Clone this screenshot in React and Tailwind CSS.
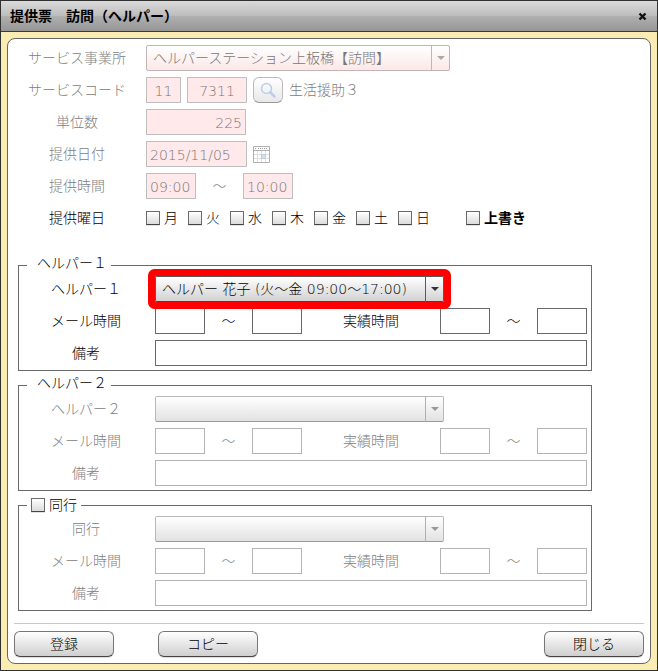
import React, { useState } from 'react'

const DAYS = ['月', '火', '水', '木', '金', '土', '日']

function TextBox({ required, className = '', ...props }) {
  const color = required
    ? 'bg-[#ffe9ea] border-[#bfbfbf]'
    : 'bg-white border-[#696969] disabled:border-[#b4b4b4]'
  return (
    <input
      type="text"
      className={`h-[26px] min-w-0 border px-[3px] pt-[2px] text-black disabled:text-[#777] outline-none ${color} ${className}`}
      {...props}
    />
  )
}

function CheckBox(props) {
  return (
    <input
      type="checkbox"
      className="appearance-none size-[14px] shrink-0 border border-[#6b6b6b] border-b-[#444] bg-linear-to-b from-white to-[#dcdcdc] shadow-[0_1px_0_#e4e4e4] checked:to-[#777]"
      {...props}
    />
  )
}

function DropDown({ id, options, disabled, required, marked, className = '' }) {
  let color = 'border-[#5a5a5a] border-b-[#444] from-white to-[#d2d2d2] text-black'
  let line = 'border-[#5a5a5a] text-[#333]'
  if (disabled) {
    color = 'border-[#b8b8b8] border-b-[#999] from-white to-[#e2e2e2] text-[#777]'
    line = 'border-[#b0b0b0] text-[#999]'
  }
  if (required) {
    color = 'border-[#c4b4b6] from-white to-[#fbe8e8] text-[#777]'
    line = 'border-[#c4b4b6] text-[#aaa]'
  }
  return (
    <div className={`relative rounded-xs ${marked ? 'z-10 ring-[7px] ring-[#ff0000]' : ''} ${className}`}>
      <select
        id={id}
        disabled={disabled}
        className={`block appearance-none w-full h-[26px] rounded-xs border bg-linear-to-b pl-[6px] pr-5 opacity-100 outline-none ${color}`}
      >
        {options.map((o) => <option key={o}>{o}</option>)}
      </select>
      <span className={`pointer-events-none absolute inset-y-0 right-0 w-[19px] border-l flex items-center justify-center ${line}`}>
        <svg width="8" height="4" viewBox="0 0 8 4"><path d="M0 0h8L4 4z" fill="currentColor" /></svg>
      </span>
    </div>
  )
}

function Row({ label, htmlFor, disabled, children }) {
  return (
    <div className="flex items-center gap-[6px] min-h-[26px]">
      <label htmlFor={htmlFor} className={`w-[126px] shrink-0 text-center ${disabled ? 'text-[#808080]' : ''}`}>{label}</label>
      {children}
    </div>
  )
}

function TimeRange({ id, label, disabled }) {
  return (
    <>
      <TextBox id={id} disabled={disabled} className="w-[50px]" />
      <span className="w-[47px] text-center">～</span>
      <TextBox aria-label={`${label} 終了`} disabled={disabled} className="w-[50px]" />
    </>
  )
}

function HelperGroup({ id, legend, label, options, disabled, marked }) {
  return (
    <fieldset className="mx-1 max-w-[574px] min-w-0 border border-[#696969] px-1 pb-1">
      {legend}
      <div className="flex flex-col gap-[6px]">
        <Row label={label} htmlFor={`${id}-name`} disabled={disabled}>
          <DropDown id={`${id}-name`} options={options} disabled={disabled} marked={marked} className="w-[289px]" />
        </Row>
        <Row label="メール時間" htmlFor={`${id}-mail`} disabled={disabled}>
          <div className={`flex flex-1 items-center ${disabled ? 'text-[#808080]' : ''}`}>
            <TimeRange id={`${id}-mail`} label="メール時間" disabled={disabled} />
            <label htmlFor={`${id}-result`} className="flex-1 text-center">実績時間</label>
            <TimeRange id={`${id}-result`} label="実績時間" disabled={disabled} />
          </div>
        </Row>
        <Row label="備考" htmlFor={`${id}-memo`} disabled={disabled}>
          <TextBox id={`${id}-memo`} disabled={disabled} className="flex-1" />
        </Row>
      </div>
    </fieldset>
  )
}

function FooterButton({ children }) {
  return (
    <button className="w-[100px] h-[26px] rounded-md border border-[#777] border-b-[#444] bg-linear-to-b from-white to-[#cfcfcf] shadow-[0_1px_1px_#ddd]">
      {children}
    </button>
  )
}

function CalendarIcon() {
  return (
    <svg width="18" height="18" viewBox="0 0 18 18" fill="none">
      <path d="M.5 1.5h16v16H.5z" fill="#fff" stroke="#b0b0b0" />
      <path d="M1 5.5h15" stroke="#b0b0b0" />
      <path d="M2 3.5h2M5 3.5h7M13 3.5h2" stroke="#999" strokeDasharray="1 1" />
      <path d="M1 9.5h15M1 13.5h15M4.5 6v11M8.5 6v11M12.5 6v11" stroke="#dedede" />
      <path d="M8.5 9.5h4v4h-4z" fill="#d3e2f1" stroke="#bdcddd" />
    </svg>
  )
}

function App() {
  const [days, setDays] = useState([])

  const toggleDay = (d) => {
    setDays(days.includes(d) ? days.filter((x) => x !== d) : [...days, d])
  }

  return (
    <div className="border border-[#303030] bg-[#fbecb3] text-[14px] leading-5 font-light text-black font-['DejaVu_Sans','Noto_Sans_CJK_JP',sans-serif]">
      <header className="flex h-[31px] items-center justify-between border-b border-[#3a3a3a] bg-[linear-gradient(#dadada,#bebebe_48%,#b0b0b0_50%,#969696)] pl-[9px] pr-[10px]">
        <h1 className="font-bold">提供票　訪問（ヘルパー）</h1>
        <button aria-label="閉じる">
          <svg width="9" height="9" viewBox="0 0 9 9"><path d="M1.5 1.5l6 6M7.5 1.5l-6 6" stroke="#111" strokeWidth="2.4" /></svg>
        </button>
      </header>

      <main className="m-[6px] rounded-lg border border-[#666] bg-white p-[6px]">
        <div className="flex flex-col gap-[6px]">
          <Row label="サービス事業所" htmlFor="office" disabled>
            <DropDown id="office" options={['ヘルパーステーション上板橋【訪問】']} disabled required className="w-[304px]" />
          </Row>
          <Row label="サービスコード" htmlFor="code" disabled>
            <TextBox id="code" required disabled defaultValue="11" className="w-[35px] text-center" />
            <TextBox aria-label="サービスコード 項目" required disabled defaultValue="7311" className="w-[60px] text-center" />
            <button disabled aria-label="検索" className="flex w-[30px] h-[26px] items-center justify-center rounded-md border border-[#bbb] border-b-[#999] bg-linear-to-b from-white to-[#e8e8e8]">
              <svg width="16" height="16" viewBox="0 0 16 16" fill="none" stroke="#bccdf0">
                <circle cx="6.5" cy="6.5" r="5" strokeWidth="1.5" />
                <path d="M10.5 10.5l4 4" strokeWidth="2.5" strokeLinecap="round" />
              </svg>
            </button>
            <span className="text-[#808080]">生活援助３</span>
          </Row>
          <Row label="単位数" htmlFor="units" disabled>
            <TextBox id="units" required disabled defaultValue="225" className="w-[100px] text-right" />
          </Row>
          <Row label="提供日付" htmlFor="date" disabled>
            <TextBox id="date" required disabled defaultValue="2015/11/05" className="w-[101px]" />
            <button disabled aria-label="カレンダー"><CalendarIcon /></button>
          </Row>
          <Row label="提供時間" htmlFor="start" disabled>
            <div className="flex items-center text-[#808080]">
              <TextBox id="start" required disabled defaultValue="09:00" className="w-[50px]" />
              <span className="w-[47px] text-center">～</span>
              <TextBox aria-label="提供時間 終了" required disabled defaultValue="10:00" className="w-[50px]" />
            </div>
          </Row>
          <Row label="提供曜日">
            <div className="flex items-center">
              {DAYS.map((d) => (
                <label key={d} className="flex w-[42px] items-center gap-1">
                  <CheckBox checked={days.includes(d)} onChange={() => toggleDay(d)} />
                  {d}
                </label>
              ))}
              <label className="ml-[26px] flex items-center gap-1 font-bold">
                <CheckBox />
                上書き
              </label>
            </div>
          </Row>
        </div>

        <div className="mt-6 flex flex-col gap-1">
          <HelperGroup
            id="helper1"
            legend={<legend className="ml-1 h-[21px] pl-[10px] pr-1 leading-4">ヘルパー１</legend>}
            label="ヘルパー１"
            options={['ヘルパー 花子 (火～金 09:00～17:00)']}
            marked
          />
          <HelperGroup
            id="helper2"
            legend={<legend className="ml-1 h-[21px] pl-[10px] pr-1 leading-4">ヘルパー２</legend>}
            label="ヘルパー２"
            options={['']}
            disabled
          />
          <HelperGroup
            id="together"
            legend={
              <legend className="ml-1 h-[21px] px-1">
                <label className="flex items-center gap-1"><CheckBox />同行</label>
              </legend>
            }
            label="同行"
            options={['']}
            disabled
          />
        </div>

        <footer className="mt-3 flex border-t border-[#c8c8c8] pt-[7px]">
          <FooterButton>登録</FooterButton>
          <div className="ml-11 flex-1"><FooterButton>コピー</FooterButton></div>
          <FooterButton>閉じる</FooterButton>
        </footer>
      </main>
    </div>
  )
}

export default App
